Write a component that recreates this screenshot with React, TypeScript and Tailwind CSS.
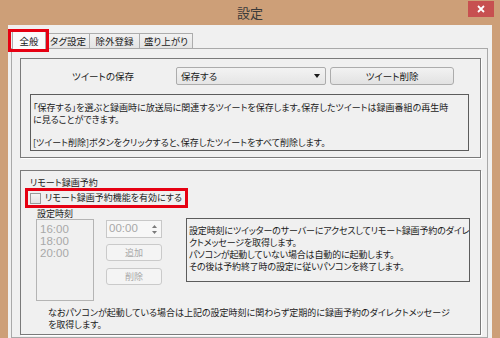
import React from 'react'

const JP = "font-['Noto_Sans_CJK_JP',sans-serif] [font-feature-settings:'palt']"
const NUM = "font-['Liberation_Sans','Noto_Sans_CJK_JP',sans-serif]"

const TABS = [
  { label: 'タグ設定', w: 'w-[44px] border-l' },
  { label: '除外登録', w: 'w-[50px]' },
  { label: '盛り上がり', w: 'w-[53px]' },
]

const TIMES = ['16:00', '18:00', '20:00']

function DisabledButton({ label }: { label: string }) {
  return (
    <div className="flex h-[17px] w-[56px] items-center justify-center rounded-[3px] border border-[#cacaca] bg-[#f4f4f4] text-[9px] text-[#a8a8a8]">
      {label}
    </div>
  )
}

export default function App() {
  return (
    <div className={`flex h-[338px] w-[500px] flex-col overflow-hidden whitespace-nowrap bg-[#cd9f78] text-[#1a1a1a] ${JP}`}>
      {/* title bar */}
      <div className="grid h-[25px] shrink-0 grid-cols-[1fr_auto_1fr] items-start">
        <div />
        <div className="pt-[5px] text-[13px] leading-[16px] text-[#3a3a3a]">設定</div>
        <div className="flex justify-end pr-[6px] pt-[1px]">
          <div className="flex h-[16px] w-[26px] items-center justify-center bg-[#c75050]">
            <svg width="8" height="8" viewBox="0 0 8 8">
              <path d="M1 1L7 7M7 1L1 7" stroke="#fff" strokeWidth="1.8" />
            </svg>
          </div>
        </div>
      </div>

      {/* client */}
      <div className="mx-[8px] flex flex-1 flex-col bg-[#f0f0f0]">
        {/* tabs */}
        <div className="mt-[6px] flex h-[17px] items-end pl-[4px]">
          <div className="relative z-10 -mb-[2px] flex h-[19px] w-[34px] items-start justify-center border border-b-0 border-[#acacac] bg-[#fbfbfb] pt-[3px] text-[9.5px] leading-[12px]">
            全般
            <div className="absolute -left-[5px] -top-[3px] h-[23px] w-[41px] border-[3px] border-[#e60012]" />
          </div>
          {TABS.map((t) => (
            <div
              key={t.label}
              className={`flex h-[15px] items-center justify-center border-r border-t border-[#acacac] bg-gradient-to-b from-[#f2f2f2] to-[#e4e4e4] text-[9.5px] leading-[12px] ${t.w}`}
            >
              {t.label}
            </div>
          ))}
        </div>

        {/* tab page */}
        <div className="ml-[3px] mr-[4px] flex flex-1 flex-col border border-[#a9a9a9] pl-[8px] pr-[6px] pt-[9px] text-[9px]">
          {/* group 1 */}
          <div className="flex h-[100px] flex-col border border-[#7a7a7a] pl-[9px] pr-[11px] pt-[8px] shadow-[1px_1px_0_#fff]">
            <div className="flex h-[18px] items-center">
              <div className="w-[146px] text-center text-[9.5px]">ツイートの保存</div>
              <div className="flex h-[18px] w-[150px] items-center justify-between rounded-[2px] border border-[#acacac] bg-gradient-to-b from-[#f3f3f3] to-[#e5e5e5] pl-[4px] pr-[5px] text-[9.5px]">
                <span>保存する</span>
                <svg width="6" height="4" viewBox="0 0 6 4">
                  <path d="M0 0H6L3 4Z" fill="#1a1a1a" />
                </svg>
              </div>
              <div className="ml-[4px] flex h-[18px] w-[124px] items-center justify-center rounded-[3px] border border-[#acacac] bg-gradient-to-b from-[#f2f2f2] to-[#e2e2e2] text-[9.5px]">
                ツイート削除
              </div>
            </div>
            <div className="mt-[9px] h-[57px] overflow-hidden border border-[#5c5c5c] px-[2px] pt-[7px] leading-[11.5px]">
              <div>「保存する」を選ぶと録画時に放送局に関連するツイートを保存します。保存したツイートは録画番組の再生時</div>
              <div>に見ることができます。</div>
              <div className="h-[11.5px]" />
              <div>[ツイート削除]ボタンをクリックすると、保存したツイートをすべて削除します。</div>
            </div>
          </div>

          {/* group 2 */}
          <div className="mt-[12px] flex h-[165px] flex-col border border-[#7a7a7a] pl-[9px] pt-[6px] shadow-[1px_1px_0_#fff]">
            <div className="leading-[12px]">リモート録画予約</div>
            <div className="relative mt-[3px] flex h-[12px] items-center">
              <div className="h-[11px] w-[11px] border border-[#9a9a9a] bg-gradient-to-b from-[#f4f4f4] to-[#e2e2e2]" />
              <span className="ml-[4px] leading-[12px]">リモート録画予約機能を有効にする</span>
              <div className="absolute -left-[5px] -top-[4px] h-[20px] w-[163px] border-[3px] border-[#e60012]" />
            </div>

            <div className="ml-[6px] mt-[4px] flex">
              <div className="flex w-[58px] flex-col">
                <div className="pl-[1px] leading-[12px]">設定時刻</div>
                <div className={`mt-[-1px] h-[82px] border border-[#b4b4b4] pl-[3px] pt-[3px] text-[11.5px] leading-[12px] text-[#a8a8a8] ${NUM}`}>
                  {TIMES.map((t) => (
                    <div key={t}>{t}</div>
                  ))}
                </div>
              </div>

              <div className="ml-[12px] mt-[12px] flex w-[56px] flex-col">
                <div className="flex h-[18px] border border-[#c8c8c8] bg-[#f7f7f7]">
                  <div className={`flex flex-1 items-center pl-[2px] text-[11.5px] text-[#a8a8a8] ${NUM}`}>00:00</div>
                  <div className="flex w-[14px] flex-col items-center justify-center gap-[3px]">
                    <svg width="5" height="3" viewBox="0 0 5 3">
                      <path d="M0 3H5L2.5 0Z" fill="#7a7a7a" />
                    </svg>
                    <svg width="5" height="3" viewBox="0 0 5 3">
                      <path d="M0 0H5L2.5 3Z" fill="#7a7a7a" />
                    </svg>
                  </div>
                </div>
                <div className="mt-[6px]">
                  <DisabledButton label="追加" />
                </div>
                <div className="mt-[7px]">
                  <DisabledButton label="削除" />
                </div>
              </div>

              <div className="ml-[24px] mt-[10px] h-[64px] w-[284px] overflow-hidden border border-[#5c5c5c] px-[2px] pt-[6px] leading-[12px] tracking-[-0.15px]">
                <div>設定時刻にツイッターのサーバーにアクセスしてリモート録画予約のダイレ</div>
                <div>クトメッセージを取得します。</div>
                <div>パソコンが起動していない場合は自動的に起動します。</div>
                <div>その後は予約終了時の設定に従いパソコンを終了します。</div>
              </div>
            </div>

            <div className="ml-[18px] mt-[6px] leading-[11.5px]">
              <div>なおパソコンが起動している場合は上記の設定時刻に関わらず定期的に録画予約のダイレクトメッセージ</div>
              <div>を取得します。</div>
            </div>
          </div>
        </div>
      </div>
    </div>
  )
}
